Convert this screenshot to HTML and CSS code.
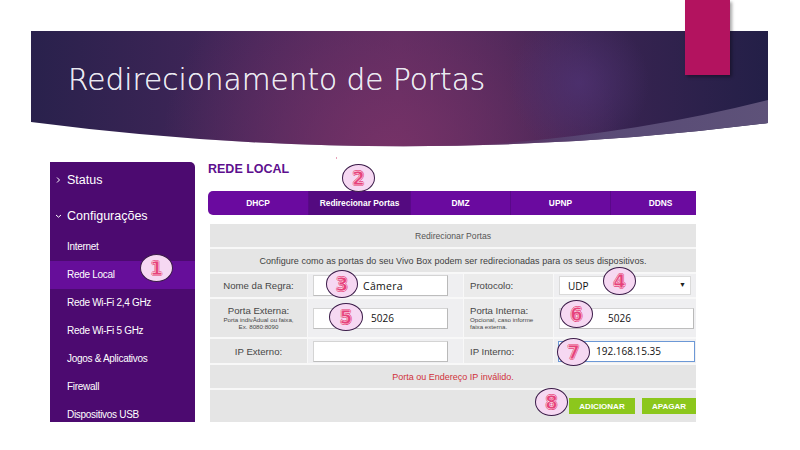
FILE: index.html
```html
<!DOCTYPE html>
<html lang="pt-BR">
<head>
<meta charset="utf-8">
<title>Redirecionamento de Portas</title>
<link rel="stylesheet" href="styles.css">
</head>
<body>
<div class="slide">
  <header class="banner">
    <svg class="banner-bg" viewBox="0 0 737 116" width="737" height="116" aria-hidden="true">
      <defs>
        <linearGradient id="lg" x1="0" y1="0" x2="1" y2="0">
          <stop offset="0" stop-color="#29214c"/>
          <stop offset="0.3" stop-color="#44265a"/>
          <stop offset="0.5" stop-color="#552a5f"/>
          <stop offset="0.72" stop-color="#3f2554"/>
          <stop offset="1" stop-color="#231f47"/>
        </linearGradient>
        <radialGradient id="rg" cx="360" cy="125" r="230" gradientUnits="userSpaceOnUse">
          <stop offset="0" stop-color="#7a3368" stop-opacity="0.9"/>
          <stop offset="1" stop-color="#7a3368" stop-opacity="0"/>
        </radialGradient>
        <radialGradient id="rg2" cx="548" cy="52" r="70" gradientUnits="userSpaceOnUse">
          <stop offset="0" stop-color="#4e3272" stop-opacity="0.8"/>
          <stop offset="1" stop-color="#4e3272" stop-opacity="0"/>
        </radialGradient>
        <linearGradient id="band" x1="0" y1="0" x2="1" y2="0">
          <stop offset="0" stop-color="#5d4f7a" stop-opacity="0"/>
          <stop offset="0.45" stop-color="#5d4f7a" stop-opacity="0.9"/>
          <stop offset="1" stop-color="#5e5279"/>
        </linearGradient>
      </defs>
      <path d="M0,0 H737 V92 Q369,139 0,91 Z" fill="url(#lg)"/>
      <path d="M0,0 H737 V92 Q369,139 0,91 Z" fill="url(#rg)"/>
      <path d="M0,0 H737 V92 Q369,139 0,91 Z" fill="url(#rg2)"/>
      <path d="M737,69 Q600,104 442,114.4 Q589.8,110.8 737,92 Z" fill="url(#band)"/>
    </svg>
    <h1 class="banner-title">Redirecionamento de Portas</h1>
  </header>
  <div class="accent-tab"></div>
  <div class="speck"></div>

  <main class="main">
    <nav class="sidebar">
      <div class="side-head">
        <svg class="chev" width="6" height="8" viewBox="0 0 6 8"><polyline points="1.5,1.5 4,4 1.5,6.5" fill="none" stroke="#fff" stroke-width="1"/></svg>
        <span>Status</span>
      </div>
      <div class="side-head side-head-open">
        <svg class="chev" width="7" height="6" viewBox="0 0 7 6"><polyline points="1,2 3.5,4.2 6,2" fill="none" stroke="#fff" stroke-width="1"/></svg>
        <span>Configurações</span>
      </div>
      <ul class="side-list">
        <li>Internet</li>
        <li class="active">Rede Local</li>
        <li>Rede Wi-Fi 2,4 GHz</li>
        <li>Rede Wi-Fi 5 GHz</li>
        <li>Jogos &amp; Aplicativos</li>
        <li>Firewall</li>
        <li>Dispositivos USB</li>
      </ul>
    </nav>

    <section class="content">
      <h2 class="page-title">REDE LOCAL</h2>
      <div class="tabs">
        <div class="tab">DHCP</div>
        <div class="tab tab-active">Redirecionar Portas</div>
        <div class="tab">DMZ</div>
        <div class="tab">UPNP</div>
        <div class="tab">DDNS</div>
      </div>

      <div class="panel">
        <div class="row-full head">Redirecionar Portas</div>
        <div class="row-full intro">Configure como as portas do seu Vivo Box podem ser redirecionadas para os seus dispositivos.</div>

        <div class="lbl lbl-c">Nome da Regra:</div>
        <div class="fld"><div class="inp inp-l"><span class="typed typed-camera">Câmera</span></div></div>
        <div class="lbl lbl-l">Protocolo:</div>
        <div class="fld"><div class="inp inp-sel"><span class="typed">UDP</span><span class="arrow">▼</span></div></div>

        <div class="lbl lbl-c">
          <div class="lbl-main">Porta Externa:</div>
          <div class="lbl-sub">Porta indivÂdual ou faixa,<br>Ex. 8080:8090</div>
        </div>
        <div class="fld"><div class="inp inp-l"><span class="typed typed-port">5026</span></div></div>
        <div class="lbl lbl-l">
          <div class="lbl-main">Porta Interna:</div>
          <div class="lbl-sub">Opcional, caso informe<br>faixa externa.</div>
        </div>
        <div class="fld"><div class="inp inp-r"><span class="typed typed-port2">5026</span></div></div>

        <div class="lbl lbl-c">IP Externo:</div>
        <div class="fld"><div class="inp inp-l"></div></div>
        <div class="lbl lbl-l">IP Interno:</div>
        <div class="fld"><div class="inp inp-r inp-focus"><span class="typed typed-ip">192.168.15.35</span></div></div>

        <div class="row-full error">Porta ou Endereço IP inválido.</div>
        <div class="row-full actions">
          <button class="btn">ADICIONAR</button>
          <button class="btn btn-last">APAGAR</button>
        </div>
      </div>
    </section>
  </main>

  <div class="mark m1">1</div>
  <div class="mark m2">2</div>
  <div class="mark m3">3</div>
  <div class="mark m4">4</div>
  <div class="mark m5">5</div>
  <div class="mark m6">6</div>
  <div class="mark m7">7</div>
  <div class="mark m8">8</div>
</div>
</body>
</html>
```
FILE: styles.css
```css
* { box-sizing: border-box; }
html, body { margin: 0; padding: 0; background: #fff; }
body { font-family: "Liberation Sans", Arial, sans-serif; }

.slide {
  position: relative;
  width: 800px;
  height: 450px;
  overflow: hidden;
  background: #fff;
}

/* Banner */
.banner {
  position: relative;
  margin: 31px 0 0 31px;
  width: 737px;
  height: 116px;
  padding: 35px 0 0 37px;
}
.banner-bg { position: absolute; left: 0; top: 0; z-index: 0; }
.banner-title {
  position: relative;
  z-index: 1;
  margin: 0;
  font-family: "DejaVu Sans", sans-serif;
  font-weight: 200;
  font-size: 29.6px;
  line-height: 29px;
  color: #e9e8f0;
  text-shadow: 0 0 0.4px #e9e8f0;
}
.accent-tab {
  position: absolute;
  left: 685px;
  top: 0;
  width: 45px;
  height: 75px;
  background: #b3135f;
  box-shadow: 2px 2px 3px rgba(0, 0, 0, 0.35);
}
.speck {
  position: absolute;
  left: 336px;
  top: 157px;
  width: 1px;
  height: 2px;
  background: #e8a0b8;
}

/* Main */
.main {
  display: flex;
  align-items: flex-start;
  margin: 15px 0 0 50px;
}

.sidebar {
  width: 145px;
  height: 260px;
  background: #4c0a70;
  border-radius: 0 5px 0 0;
  overflow: hidden;
  color: #fff;
}
.side-head {
  display: flex;
  align-items: center;
  height: 36px;
  padding-left: 4px;
  font-size: 12.5px;
}
.side-head-open { height: 35px; }
.chev { width: 9px; margin-right: 4px; }
.side-list { list-style: none; margin: 0; padding: 0; }
.side-list li {
  height: 28px;
  line-height: 28px;
  padding-left: 17px;
  font-size: 10px;
  letter-spacing: -0.3px;
}
.side-list li.active { background: #660e9a; }

.content {
  width: 488px;
  margin-left: 13px;
}
.page-title {
  margin: 0;
  font-size: 12.5px;
  line-height: 15px;
  font-weight: bold;
  color: #5d0f8e;
}
.tabs {
  display: grid;
  grid-template-columns: 100px 102px 100px 100px 100px;
  height: 24px;
  margin-top: 14px;
  background: #6a0a9f;
  border-radius: 5px 0 0 5px;
  overflow: hidden;
}
.tab {
  display: flex;
  align-items: center;
  justify-content: center;
  color: #fff;
  font-size: 8.4px;
  font-weight: bold;
  border-left: 1px solid #5a0889;
}
.tab:first-child { border-left: 0; }
.tab-active { background: #540a80; }

.panel {
  display: grid;
  grid-template-columns: 97px 155px 89px 1fr;
  grid-template-rows: 23px 23px 23px 38px 24px 23px 32px;
  gap: 2px 1px;
  width: 486px;
  margin: 9px 0 0 2px;
  background: #f8f8f8;
  color: #4a4a4a;
  font-size: 9px;
}
.row-full {
  grid-column: 1 / -1;
  background: #e5e5e5;
  display: flex;
  align-items: center;
  justify-content: center;
}
.head { color: #555; font-size: 8.6px; }
.intro { color: #3f3f3f; font-size: 9px; letter-spacing: 0.05px; }
.error { color: #d0323a; font-size: 9px; }
.actions {
  justify-content: flex-end;
  align-items: flex-start;
  padding-top: 8px;
  gap: 7px;
}
.btn {
  height: 16px;
  border: 0;
  padding: 0;
  background: #8cc71c;
  color: #fff;
  font-family: "Liberation Sans", Arial, sans-serif;
  font-size: 8px;
  font-weight: bold;
  width: 66px;
}
.btn-last { width: 54px; }

.lbl {
  background: #e6e6e6;
  display: flex;
  flex-direction: column;
  justify-content: center;
  font-size: 9.6px;
  color: #474747;
}
.lbl-c { align-items: center; text-align: center; }
.lbl-l { align-items: flex-start; padding-left: 6px; background: #ebebeb; }
.lbl-main { font-size: 9.6px; line-height: 10px; }
.lbl-sub { font-size: 6.2px; line-height: 6.5px; margin-top: 1px; }
.fld {
  background: #efeff1;
  display: flex;
  align-items: center;
  padding-left: 5px;
}
.inp {
  position: relative;
  height: 21px;
  background: #fff;
  border: 1px solid #d4d4d4;
  border-right-color: #b9b9b9;
  border-bottom-color: #bdbdbd;
  display: flex;
  align-items: center;
}
.inp-l { width: 135px; }
.inp-r { width: 135px; }
.inp-sel { width: 132px; height: 19px; border-color: #dadada; }
.inp-focus { border-color: #6c98d6; margin-left: -1px; width: 137px; }
.typed {
  font-family: "Open Sans", sans-serif;
  font-size: 10px;
  color: #111;
}
.typed-camera { margin-left: 49px; font-size: 10.5px; letter-spacing: 0.3px; }
.typed-port { margin-left: 57px; }
.typed-port2 { margin-left: 48px; }
.typed-ip { margin-left: 37px; }
.inp-sel .typed { margin-left: 8px; }
.arrow {
  position: absolute;
  right: 4px;
  top: 4px;
  font-size: 7px;
  color: #222;
}

/* Annotation markers */
.mark {
  position: absolute;
  width: 33px;
  height: 28px;
  border-radius: 50%;
  background: #f6d8f2;
  border: 1.5px solid #3a1b48;
  display: flex;
  align-items: center;
  justify-content: center;
  font-family: "DejaVu Sans", sans-serif;
  font-stretch: condensed;
  font-weight: bold;
  font-size: 20px;
  line-height: 1;
  color: #e6417b;
  -webkit-text-stroke: 0.45px #fff;
  text-shadow: 0.8px 0 0 #e6417b, -0.8px 0 0 #e6417b, 0 0.8px 0 #e6417b, 0 -0.8px 0 #e6417b;
}
.m1 { left: 140px; top: 254px; }
.m2 { left: 342px; top: 164px; }
.m3 { left: 326px; top: 270px; width: 32px; }
.m4 { left: 603px; top: 267px; }
.m5 { left: 329px; top: 303px; width: 34px; }
.m6 { left: 560px; top: 300px; }
.m7 { left: 557px; top: 338px; }
.m8 { left: 535px; top: 388px; }
```
